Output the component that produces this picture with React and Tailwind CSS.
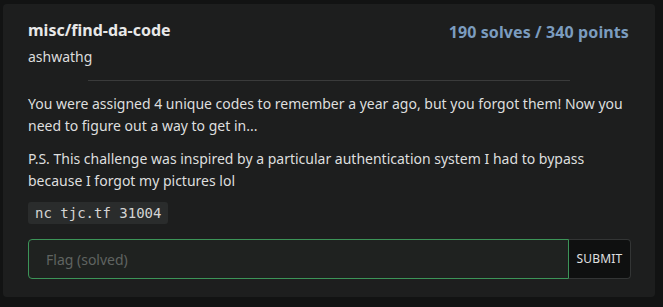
export default function App() {
  return (
    <div className="w-[663px] h-[307px] bg-[#121313] pl-[3px] pt-[4px] font-['Noto_Sans',sans-serif]">
      <div className="w-[652px] bg-[#1d1e1e] rounded-[4px] px-[25px] pt-[14px] pb-[18px]">
        {/* Header */}
        <div className="flex justify-between items-start">
          <div>
            <h1 className="text-[16px] leading-[24px] font-bold text-[#e8e8e8]">misc/find-da-code</h1>
            <p className="text-[14px] leading-[20px] mt-[5px] text-[#dcdcdc]">ashwathg</p>
          </div>
          <div className="text-[16px] leading-[24px] font-bold tracking-[0.1px] text-[#7b9cbf] pt-[2px] pr-[1px]">
            190 solves / 340 points
          </div>
        </div>

        <hr className="w-[80%] mx-auto mt-[13px] border-0 h-px bg-[#3a3b3b]" />

        {/* Description */}
        <div className="mt-[12px] text-[14px] leading-[22px] text-[#dedede]">
          <p className="mb-[11px]">
            You were assigned 4 unique codes to remember a year ago, but you forgot them! Now you need to figure out a way to get in...
          </p>
          <p>
            P.S. This challenge was inspired by a particular authentication system I had to bypass because I forgot my pictures lol
          </p>
        </div>

        <div className="mt-[10px] inline-flex items-center h-[22px] px-[7px] rounded-[3px] bg-[#2a2c2c] font-['DejaVu_Sans_Mono',monospace] text-[14px] text-[#d4d4d4]">
          nc tjc.tf 31004
        </div>

        {/* Flag form */}
        <div className="mt-[15px] flex h-[40px] w-[603px]">
          <input
            className="flex-1 h-full bg-[#1f2220] border border-[#3c9458] rounded-l-[4px] px-[17px] text-[14px] text-[#ddd] placeholder:text-[#5f6461] outline-none"
            placeholder="Flag (solved)"
            disabled
          />
          <button className="w-[62px] h-full bg-[#0f1010] border border-l-0 border-[#333535] rounded-r-[4px] text-[12px] text-[#e0e0e0] tracking-[0.2px]">
            SUBMIT
          </button>
        </div>
      </div>
    </div>
  )
}
